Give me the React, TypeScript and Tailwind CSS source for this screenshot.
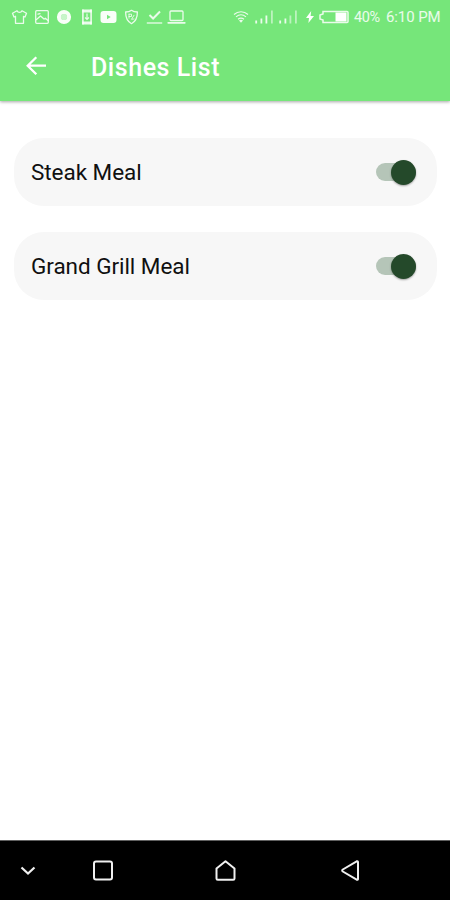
import React, { useState } from "react";

function StatusBar() {
  const line = { fill: "none", stroke: "currentColor", strokeWidth: 1.3, strokeLinejoin: "round", strokeLinecap: "round" } as const;
  return (
    <div className="flex h-[34px] items-center justify-between pl-[11px] pr-[9px] text-white/85">
      <div className="flex items-center">
        <svg className="mr-1.5 h-4 w-[17px]" viewBox="0 0 17 16" {...line}>
          <path d="M6 1.8 1.5 4.2 3 8l1.5-.7v7h8v-7L14 8l1.5-3.8L11 1.8C10 4 7 4 6 1.8Z" />
        </svg>
        <svg className="mr-1.5 h-4 w-4" viewBox="0 0 16 16" {...line}>
          <rect x="1.7" y="1.7" width="12.6" height="12.6" rx="1" />
          <path d="m2.5 10.5 4-3.5 3.5 3 1.3-.8 2.7 2.3M4 5.2 6 4.6" />
        </svg>
        <svg className="mr-[9px] h-4 w-4" viewBox="0 0 16 16" fill="none" stroke="white">
          <circle cx="8" cy="8" r="5.1" strokeWidth="4" strokeOpacity=".95" />
          <circle cx="8" cy="8" r="3.1" fill="white" fillOpacity=".6" stroke="none" />
        </svg>
        <svg className="mr-[7px] h-[18px] w-3" viewBox="0 0 12 18" fill="none" stroke="currentColor">
          <path d="M1.9 1.5v15M10.1 1.5v15" strokeWidth="1.6" />
          <path d="M1.3 3h9.4M1.3 15h9.4" strokeWidth="3" />
          <path d="M6 5.5v6M4.1 9.5 6 11.5l1.9-2" strokeWidth="1.2" />
        </svg>
        <svg className="mr-[7px] h-4 w-[17px]" viewBox="0 0 17 16" fill="white" fillOpacity=".95">
          <path fillRule="evenodd" d="M3.5 2h10a3 3 0 0 1 3 3v6a3 3 0 0 1-3 3h-10a3 3 0 0 1-3-3V5a3 3 0 0 1 3-3ZM7 5.8v4.4L10.7 8Z" />
        </svg>
        <svg className="mr-[7px] h-4 w-[15px]" viewBox="0 0 15 16" {...line}>
          <path d="M7.5 1.3C5.8 2.6 3.8 3 1.6 3c0 5 .8 9 5.9 11.7C12.6 12 13.4 8 13.4 3c-2.2 0-4.2-.4-5.9-1.7Z" />
          <path d="M5 5.2v4M5 5.2h2.5v2.3H5m5-1.2-2.5 4L10 10" strokeWidth=".9" />
        </svg>
        <svg className="mr-1 h-4 w-[17px]" viewBox="0 0 17 16" fill="none" stroke="currentColor">
          <path d="m3.5 6 3.6 3.5L14 2.5" strokeWidth="2" />
          <path d="M.8 14h15.4" strokeWidth="1.3" />
        </svg>
        <svg className="h-4 w-[19px]" viewBox="0 0 19 16" {...line}>
          <rect x="3" y="2" width="13" height="9.5" rx="1" />
          <path d="M1.2 13.8h16.6" strokeWidth="1.7" />
        </svg>
      </div>
      <div className="flex items-center">
        <svg className="mr-[6px] h-4 w-4" viewBox="0 0 16 16" fill="none" stroke="currentColor" strokeWidth="1.1">
          <path d="M1 5.5C5 1.8 11 1.8 15 5.5M3 7.9c3-2.6 7-2.6 10 0M5 10.3c2-1.5 4-1.5 6 0" />
          <path d="M6 11.5c1.4-1 2.6-1 4 0l-2 2.3Z" fill="currentColor" stroke="none" />
        </svg>
        <svg className="mr-[5px] h-4 w-[19px]" viewBox="0 0 19 16" fill="none" stroke="currentColor" strokeWidth="1.8">
          <path d="M1.2 11.5v3M6.4 9.5v5M11.4 6.5v8" />
          <path d="M16.9 1.5v13" strokeOpacity=".6" />
        </svg>
        <svg className="mr-2 h-4 w-[19px]" viewBox="0 0 19 16" fill="none" stroke="currentColor" strokeWidth="1.8">
          <path d="M1.2 11.5v3M6.4 9.5v5" />
          <path d="M11.4 6.5v8M16.9 1.5v13" strokeOpacity=".6" />
        </svg>
        <svg className="mr-[5px] h-3 w-2" viewBox="0 0 8 12" fill="white">
          <path d="M5.2 0 0 7h3L2.4 12 8 5H4.6Z" />
        </svg>
        <svg className="mr-[5px] h-4 w-[30px]" viewBox="0 0 30 16">
          <path d="M4 2.5h24q1 0 1 1v9q0 1-1 1H4V11L1 10V6l3-1Z" fill="none" stroke="currentColor" strokeWidth="1.5" />
          <path d="M16.5 3.5h11v9h-11Z" fill="white" />
        </svg>
        <span className="mr-[5px] w-[27px] whitespace-nowrap pt-px text-[14.5px] tracking-[-0.35px]">40%</span>
        <span className="w-[55px] whitespace-nowrap pt-px text-[15px] tracking-[-0.1px]">6:10 PM</span>
      </div>
    </div>
  );
}

function Header() {
  return (
    <header className="relative h-[101px] shrink-0 bg-[#76e67a] shadow-[0_1px_3px_rgba(0,0,0,0.35)]">
      <StatusBar />
      <div className="flex h-[66px] items-center pl-[24px] text-white">
        <button aria-label="Back" className="mr-[43px] h-6 w-6">
          <svg viewBox="0 0 24 24" className="h-6 w-6" fill="none" stroke="currentColor" strokeWidth="2.3">
            <path d="M22 10.7H4M12.3 2.2 3.7 10.7l8.6 8.6" />
          </svg>
        </button>
        <h1 className="pt-0.5 text-[25px] font-medium tracking-[0.55px]">Dishes List</h1>
      </div>
    </header>
  );
}

function DishCard({ name }: { name: string }) {
  const [on, setOn] = useState(true);
  return (
    <li className="flex h-[68px] items-center justify-between rounded-[30px] bg-[#f7f7f7] pl-[17px] pr-[21px]">
      <span className="pt-0.5 text-[22.5px] tracking-[-0.05px] text-[#101010]">{name}</span>
      <button
        role="switch"
        aria-checked={on}
        aria-label={name}
        onClick={() => setOn(!on)}
        className={`flex h-[18px] w-10 items-center rounded-full ${on ? "justify-end bg-[#b5c5b8]" : "justify-start bg-gray-300"}`}
      >
        <span className={`h-[25px] w-[25px] rounded-full shadow-[0_1px_2px_rgba(0,0,0,0.35)] ${on ? "bg-[#24492a]" : "bg-white"}`} />
      </button>
    </li>
  );
}

function NavigationBar() {
  return (
    <nav className="flex h-[60px] shrink-0 items-center border-t border-[#606060] bg-black pl-[16px] text-[#f0f0f0]">
      <svg className="mr-[51px] h-6 w-6" viewBox="0 0 24 24" fill="none" stroke="currentColor" strokeWidth="2.2">
        <path d="m5.5 8.5 6.5 6 6.5-6" />
      </svg>
      <svg className="mr-[98px] h-6 w-6" viewBox="0 0 24 24" fill="none" stroke="currentColor" strokeWidth="2">
        <rect x="3" y="2.5" width="18" height="18" rx="2" />
      </svg>
      <svg className="mr-[102px] h-6 w-6" viewBox="0 0 24 24" fill="none" stroke="currentColor" strokeWidth="2" strokeLinejoin="round">
        <path d="M12.5 2.2 3.5 9.5V19.5q0 1.3 1.3 1.3h15.4q1.3 0 1.3-1.3V9.5Z" />
      </svg>
      <svg className="h-6 w-6" viewBox="0 0 24 24" fill="none" stroke="currentColor" strokeWidth="2" strokeLinejoin="round">
        <path d="m3.8 10.5 13.9-8.2q1.3-.5 1.3.8v16.8q0 1.3-1.3.8L3.8 12.5q-1.2-1 0-2Z" />
      </svg>
    </nav>
  );
}

export default function App() {
  return (
    <div className="flex h-[900px] w-[450px] flex-col overflow-hidden bg-white font-['Roboto',sans-serif]">
      <Header />
      <main className="flex-1 pl-[14px] pr-[13px] pt-[37px]">
        <ul className="flex flex-col gap-[26px]">
          <DishCard name="Steak Meal" />
          <DishCard name="Grand Grill Meal" />
        </ul>
      </main>
      <NavigationBar />
    </div>
  );
}
